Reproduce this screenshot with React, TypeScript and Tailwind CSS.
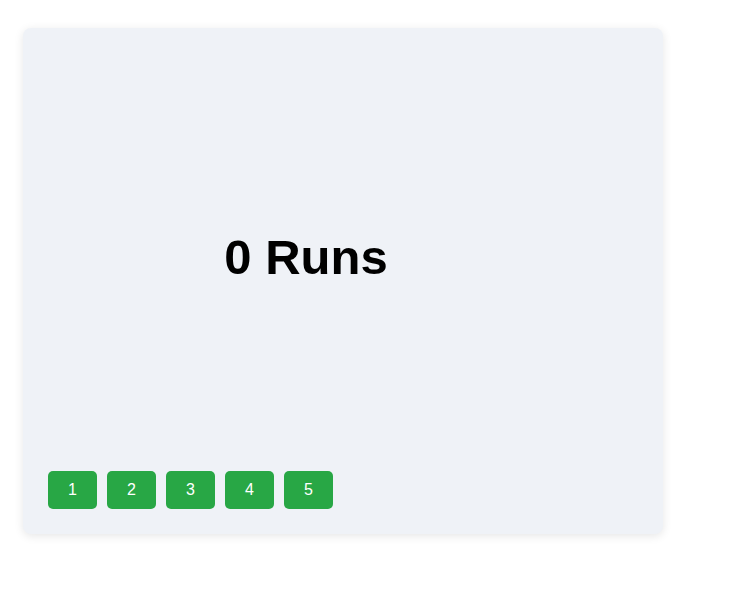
export default function App() {
  const pages = [1, 2, 3, 4, 5];

  return (
    <div className="min-h-screen bg-white pl-[23px] pt-[28px]" style={{ fontFamily: "'Liberation Sans', Arial, sans-serif" }}>
      <div className="flex h-[506px] w-[640px] flex-col gap-[10px] rounded-lg bg-[#eff2f7] p-[25px] shadow-[0_2px_10px_rgba(0,0,0,0.1)]">
        {/* Score */}
        <div className="flex w-[516px] flex-1 items-center justify-center">
          <h1 className="text-[49px] font-bold leading-none text-black">0 Runs</h1>
        </div>

        {/* Buttons */}
        <div className="flex gap-[10px]">
          {pages.map((n) => (
            <button
              key={n}
              className="h-[38px] w-[49px] rounded-[5px] bg-[#28a745] text-[16px] text-white"
            >
              {n}
            </button>
          ))}
        </div>
      </div>
    </div>
  );
}
